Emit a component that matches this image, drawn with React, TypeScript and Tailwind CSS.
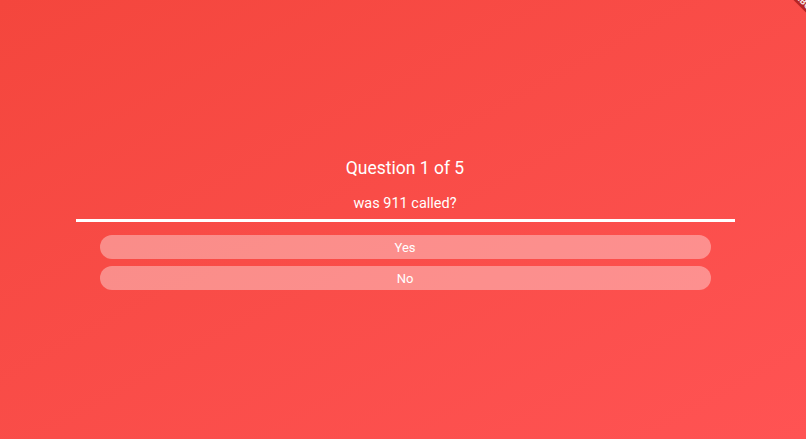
import React from 'react';

const answers = ["Yes", "No"];

export default function App() {
  return (
    <div
      className="relative h-screen w-full overflow-hidden bg-gradient-to-br from-[#f4463d] to-[#ff5353] text-white"
      style={{ fontFamily: 'Roboto, "Noto Sans", sans-serif' }}
    >
      {/* debug ribbon corner */}
      <div className="absolute top-[-4px] right-[-38px] w-[80px] h-[12px] rotate-45 bg-[#a31c1c]/80 flex items-center justify-center text-[9px] font-bold leading-none text-white/90 tracking-wide">
        DEBUG
      </div>

      <div className="flex flex-col items-center pt-[156px] pl-[4px]">
        <h1 className="text-[17.5px] leading-[24px] font-normal">Question 1 of 5</h1>
        <p className="mt-[14px] text-[14.5px] leading-[20px]">was 911 called?</p>
        <div className="mt-[5px] h-[3px] w-[659px] bg-white" />
        <div className="mt-[13px] flex flex-col gap-[7px]">
          {answers.map((a) => (
            <button
              key={a}
              className="h-[24px] w-[611px] rounded-full bg-white/[0.37] text-[13px] leading-none text-white"
            >
              {a}
            </button>
          ))}
        </div>
      </div>
    </div>
  );
}
